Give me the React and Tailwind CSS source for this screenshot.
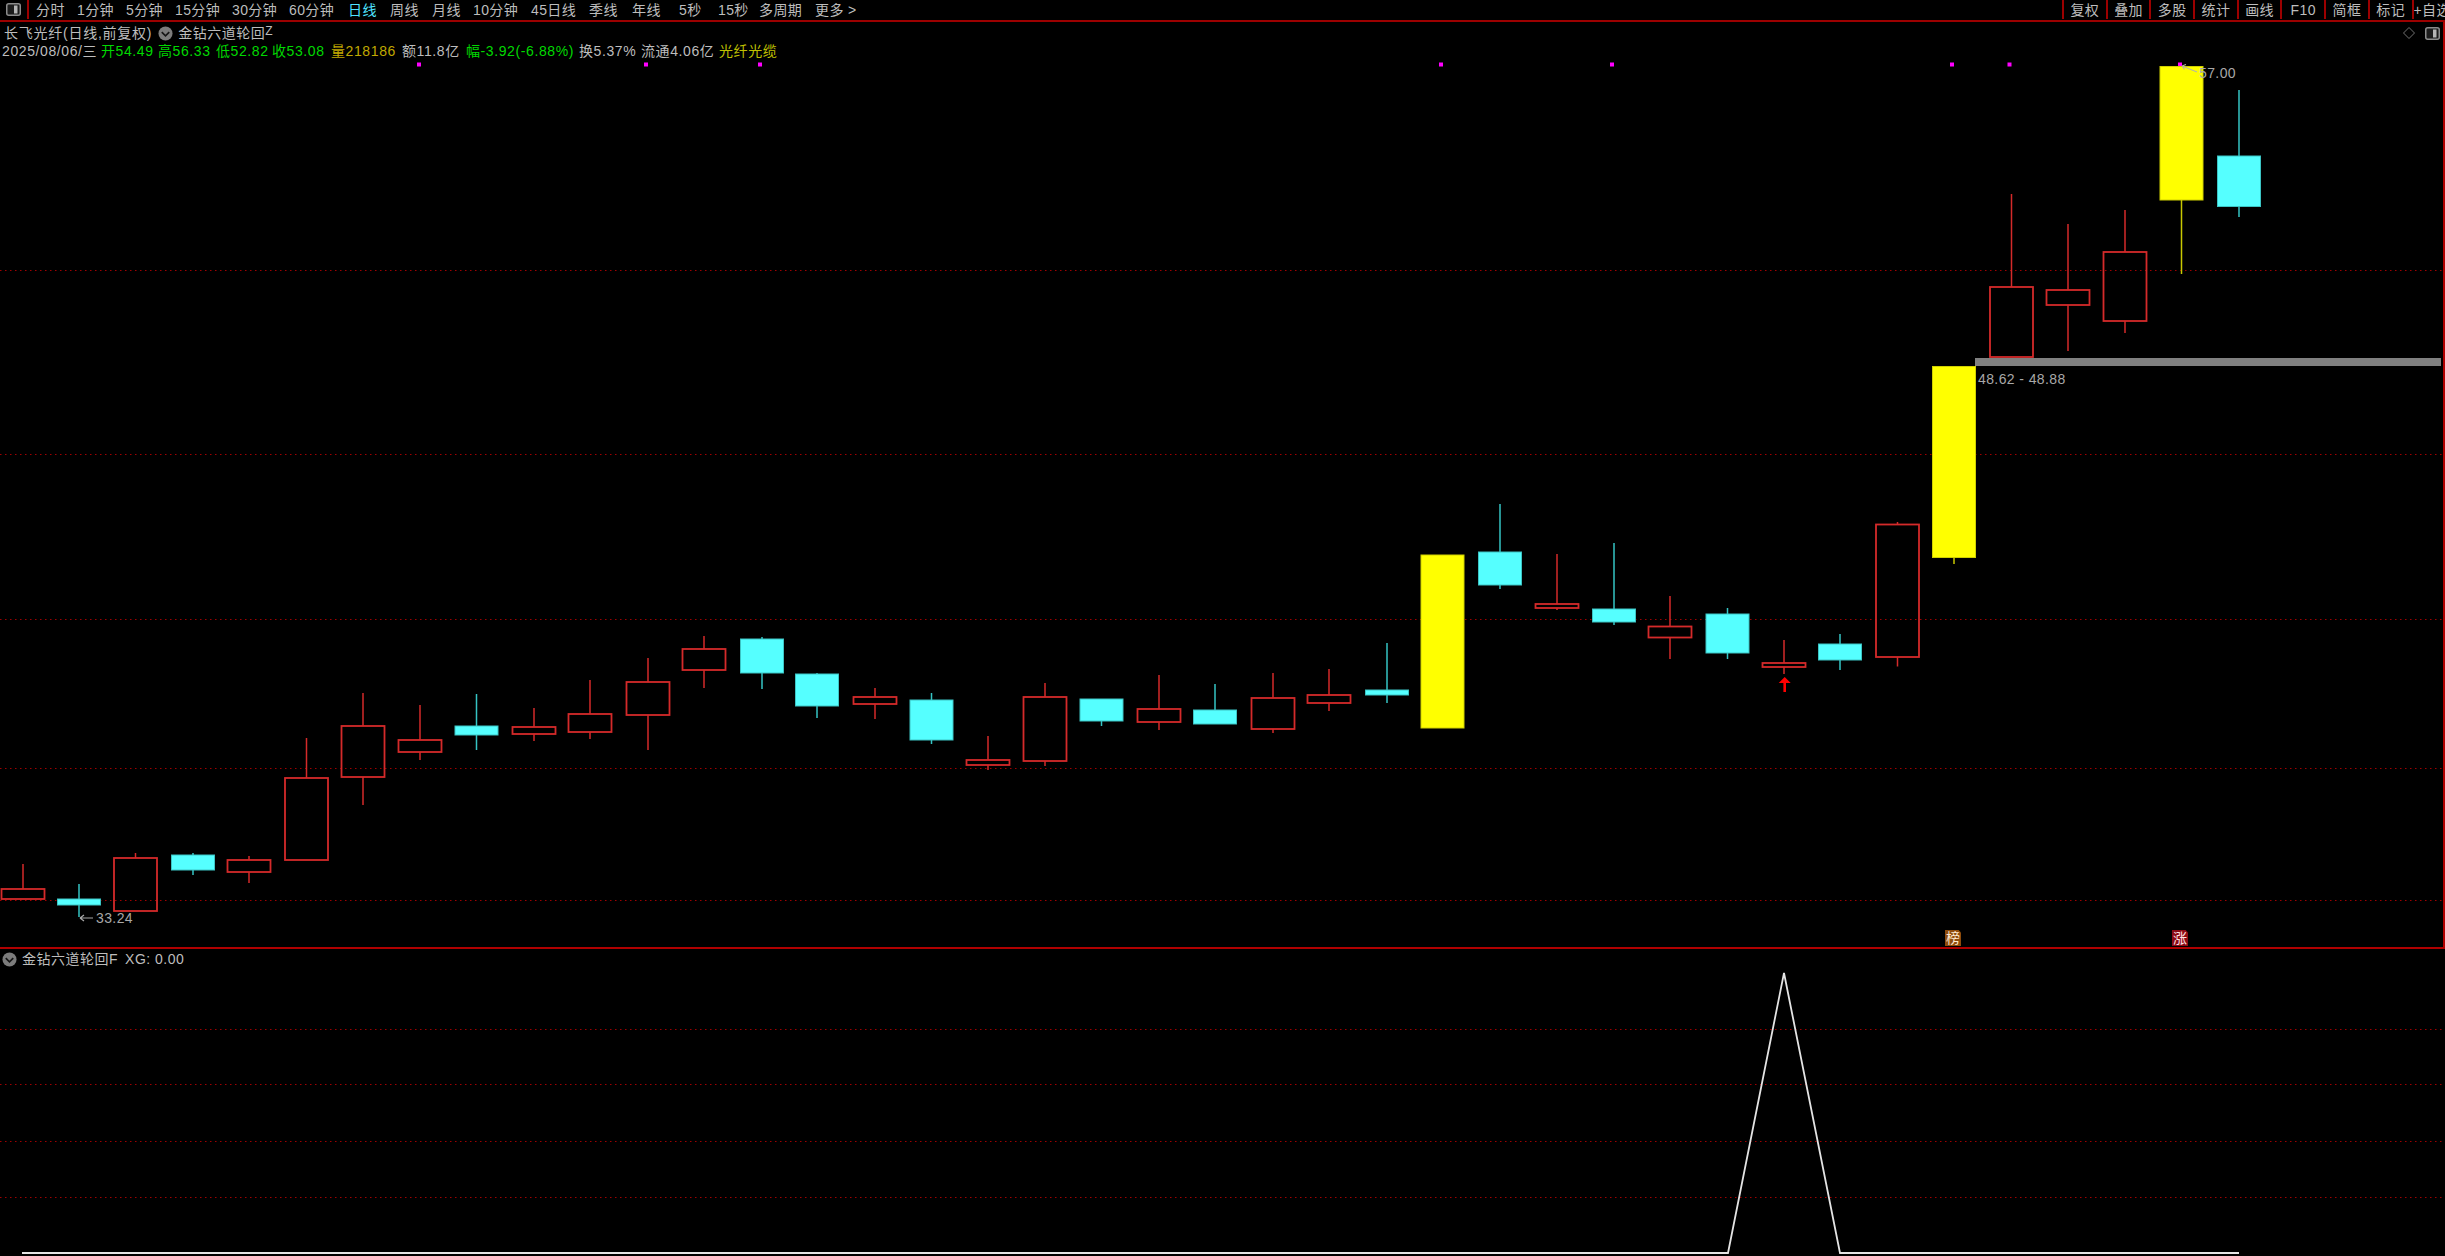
import React from "react";

const CANDLES = [
  [23, 864, 889, 889, 899, "r"], [79, 884, 917, 899, 905, "c"], [135.5, 853, 858, 858, 911, "r"],
  [193, 853, 875, 855, 870, "c"], [249, 856, 883, 860, 872, "r"], [306.5, 738, 778, 778, 860, "r"],
  [363, 693, 805, 726, 777, "r"], [420, 705, 760, 740, 752, "r"], [476.5, 694, 750, 726, 735, "c"],
  [534, 708, 741, 727, 734, "r"], [590, 680, 739, 714, 732, "r"], [648, 658, 750, 682, 715, "r"],
  [704, 636, 688, 649, 670, "r"], [762, 637, 689, 639, 673, "c"], [817, 673, 718, 674, 706, "c"],
  [875, 688, 719, 697, 704, "r"], [931.5, 693, 744, 700, 740, "c"], [988, 736, 770, 760, 765, "r"],
  [1045, 683, 766, 697, 761, "r"], [1101.5, 699, 726, 699, 721, "c"], [1159, 675, 730, 709, 722, "r"],
  [1215, 684, 724, 710, 724, "c"], [1273, 673, 733, 698, 729, "r"], [1329, 669, 711, 695, 703, "r"],
  [1387, 643, 703, 690, 695, "c"], [1442.5, 555, 728, 555, 728, "y"], [1500, 504, 589, 552, 585, "c"],
  [1557, 554, 610, 604, 608, "r"], [1614, 543, 625, 609, 622, "c"], [1670, 596, 659, 626.5, 637.5, "r"],
  [1727.5, 608, 659, 614, 653, "c"], [1784, 640, 674, 663, 667, "r"], [1840, 634, 670, 644, 660, "c"],
  [1897.5, 522, 666.5, 524.5, 657, "r"], [1954, 366.5, 564, 366.5, 557.5, "y"], [2011.5, 194, 357, 287, 357, "r"],
  [2068, 224, 351, 290, 305, "r"], [2125, 210, 333, 252, 321, "r"], [2181.5, 66.5, 274, 66.5, 200, "y"],
  [2239, 90, 217, 156, 206.5, "c"],
];

const STYLE = {
  r: { wick: "#d42a2a", fill: "none", edge: "#d42a2a", w: 1.8 },
  c: { wick: "#35c4c4", fill: "#55ffff", edge: "#3cc4c4", w: 1 },
  y: { wick: "#c8c800", fill: "#ffff00", edge: "#d0d000", w: 1 },
};

const MAIN_GRID = [270.5, 454.5, 619.5, 768.5, 900.5];
const SUB_GRID = [1029.5, 1084.5, 1141.5, 1197.5];
const MARKERS = [419, 646, 760, 1441, 1612, 1952, 2009.5, 2180];

const LEFT_TABS = [
  ["分时", "w-[28px] ml-[35px]"], ["1分钟", "w-[37px] ml-[13px]"], ["5分钟", "w-[38px] ml-[12px]"],
  ["15分钟", "w-[46px] ml-[11px]"], ["30分钟", "w-[46px] ml-[11px]"], ["60分钟", "w-[46px] ml-[11px]"],
  ["日线", "w-[29px] ml-[13px] text-[#4fe3ff]"], ["周线", "w-[29px] ml-[13px]"], ["月线", "w-[29px] ml-[13px]"],
  ["10分钟", "w-[46px] ml-[12px]"], ["45日线", "w-[46px] ml-[12px]"], ["季线", "w-[29px] ml-[12px]"],
  ["年线", "w-[29px] ml-[14px]"], ["5秒", "w-[22px] ml-[18px]"], ["15秒", "w-[30px] ml-[17px]"],
  ["多周期", "w-[44px] ml-[11px]"], ["更多 >", "w-[44px] ml-[12px]"],
];
const RIGHT_TABS = ["复权", "叠加", "多股", "统计", "画线", "F10", "简框", "标记"];

function PanelIcon({ className }) {
  return (
    <svg viewBox="0 0 15 13" className={className}>
      <rect x="0.75" y="0.75" width="13.5" height="11.5" rx="2" fill="#1c1c1c" stroke="#8c8c8c" strokeWidth="1.5" />
      <rect x="8" y="2.5" width="3.5" height="8" fill="#b4b4b4" />
    </svg>
  );
}

function ChevronDot({ className }) {
  return (
    <svg viewBox="0 0 16 16" className={className}>
      <circle cx="8" cy="8" r="7.5" fill="#7c7c7c" />
      <path d="M4 6.5 L8 10.5 L12 6.5" fill="none" stroke="#161616" strokeWidth="1.8" />
    </svg>
  );
}

function Candle({ d }) {
  const [x, hi, lo, top, bot, t] = d;
  const s = STYLE[t];
  return (
    <g>
      {hi < top && <line x1={x} x2={x} y1={hi} y2={top} stroke={s.wick} strokeWidth="1.5" />}
      {lo > bot && <line x1={x} x2={x} y1={bot} y2={lo} stroke={s.wick} strokeWidth="1.5" />}
      <rect x={x - 21.5} y={top} width="43" height={bot - top} fill={s.fill} stroke={s.edge} strokeWidth={s.w} />
    </g>
  );
}

function Dotted({ y }) {
  return <line x1="0" x2="2445" y1={y} y2={y} stroke="#a00000" strokeWidth="1" strokeDasharray="1.5 3.5" />;
}

export default function App() {
  return (
    <div className="w-[2445px] h-[1256px] bg-black flex flex-col overflow-hidden text-[14px] leading-[16px] text-[#bdbdbd] tracking-[0.4px] [font-family:'Liberation_Sans','Noto_Sans_CJK_SC',sans-serif]">
      <header className="h-[22px] shrink-0 flex items-center border-b-2 border-[#9c0000] pb-[1px]">
        <div className="w-[29px] h-full shrink-0 border-r-2 border-[#9c0000] flex items-center justify-center">
          <PanelIcon className="w-[15px] h-[13px]" />
        </div>
        <nav className="flex items-center -ml-[28px]">
          {LEFT_TABS.map(([t, c]) => (
            <span key={t} className={`whitespace-nowrap ${c}`}>{t}</span>
          ))}
        </nav>
        <div className="ml-auto flex h-full">
          {RIGHT_TABS.map((t) => (
            <span key={t} className="w-[43.7px] h-full border-l-2 border-[#9c0000] flex items-center justify-center whitespace-nowrap">{t}</span>
          ))}
          <span className="w-[33.5px] h-full border-l-2 border-[#9c0000] flex items-center overflow-hidden whitespace-nowrap">+自选</span>
        </div>
      </header>

      <main className="relative h-[927px] shrink-0 border-b-2 border-r-2 border-[#b00000]">
        <svg className="absolute inset-0 w-full h-full" viewBox="0 22 2443 925" preserveAspectRatio="none">
          {MAIN_GRID.map((y) => <Dotted key={y} y={y} />)}
          {MARKERS.map((x) => <rect key={x} x={x - 2} y="62.5" width="4" height="4" fill="#ff00ff" />)}
          {CANDLES.map((d) => <Candle key={d[0]} d={d} />)}
          <rect x="1975" y="358" width="466" height="8" fill="#808080" />
          <path d="M1778.7 683 L1784.7 677 L1790.7 683 L1786 683 L1786 692 L1783.4 692 L1783.4 683 Z" fill="#ff0000" />
          <path d="M93 918 H80 M80 918 L84 915 M80 918 L84 921" stroke="#a8a8a8" strokeWidth="1.2" fill="none" />
          <path d="M2197 72 L2182 66 M2182 66 L2186 64.5 M2182 66 L2184.5 69.5" stroke="#b8b8a0" strokeWidth="1.2" fill="none" />
        </svg>

        <div className="absolute left-[4px] top-[2px] flex items-center h-[18px] whitespace-nowrap">
          <span className="tracking-[0.75px]">长飞光纤(日线,前复权)</span>
          <ChevronDot className="w-[15px] h-[15px] ml-[6px]" />
          <span className="ml-[5px] tracking-[0.5px]">金钻六道轮回<span className="relative -top-[3px] text-[12px]">Z</span></span>
        </div>

        <div className="absolute left-[2px] top-[20px] flex items-center h-[18px] whitespace-nowrap tracking-[0.6px]">
          <span className="w-[99px]">2025/08/06/三</span>
          <span className="w-[57px] text-[#00d800]">开54.49</span>
          <span className="w-[58px] text-[#00d800]">高56.33</span>
          <span className="w-[56px] text-[#00d800]">低52.82</span>
          <span className="w-[59px] text-[#00d800]">收53.08</span>
          <span className="w-[71px] text-[#c0a800]">量218186</span>
          <span className="w-[64px]">额11.8亿</span>
          <span className="w-[113px] text-[#00d800]">幅-3.92(-6.88%)</span>
          <span className="w-[62px]">换5.37%</span>
          <span className="w-[78px]">流通4.06亿</span>
          <span className="text-[#c0c000]">光纤光缆</span>
        </div>

        <svg viewBox="0 0 12 12" className="absolute left-[2403px] top-[5px] w-[12px] h-[12px]">
          <path d="M6 0.5 L11.5 6 L6 11.5 L0.5 6 Z" fill="none" stroke="#707070" strokeWidth="1" />
        </svg>
        <PanelIcon className="absolute left-[2425px] top-[5px] w-[15px] h-[13px]" />

        <span className="absolute left-[96px] top-[888px] text-[#a8a8a8]">33.24</span>
        <span className="absolute left-[2199px] top-[43px] text-[#a8a8a8]">57.00</span>
        <span className="absolute left-[1978px] top-[349px] text-[#a8a8a8]">48.62 - 48.88</span>

        <span className="absolute left-[1945px] top-[908px] w-[16px] h-[16px] bg-[#8f4c0c] text-[14px] leading-[16px] text-center text-[#ffe9d0] tracking-normal [clip-path:polygon(0_0,85%_0,100%_15%,100%_100%,0_100%)]">榜</span>
        <span className="absolute left-[2172px] top-[908px] w-[16px] h-[16px] bg-[#8c0a14] text-[14px] leading-[16px] text-center text-[#ffe0e0] tracking-normal [clip-path:polygon(0_0,85%_0,100%_15%,100%_100%,0_100%)]">涨</span>
      </main>

      <section className="relative flex-1">
        <svg className="absolute inset-0 w-full h-full" viewBox="0 949 2445 307" preserveAspectRatio="none">
          {SUB_GRID.map((y) => <Dotted key={y} y={y} />)}
          <path d="M22 1253 H1728 L1784 973 L1840 1253 H2239" fill="none" stroke="#e4e4e4" strokeWidth="1.8" />
        </svg>
        <div className="absolute left-[2px] top-[1px] flex items-center h-[18px] whitespace-nowrap tracking-[0.5px]">
          <ChevronDot className="w-[15px] h-[15px]" />
          <span className="ml-[5px]">金钻六道轮回F</span>
          <span className="ml-[7px]">XG: 0.00</span>
        </div>
      </section>
    </div>
  );
}
